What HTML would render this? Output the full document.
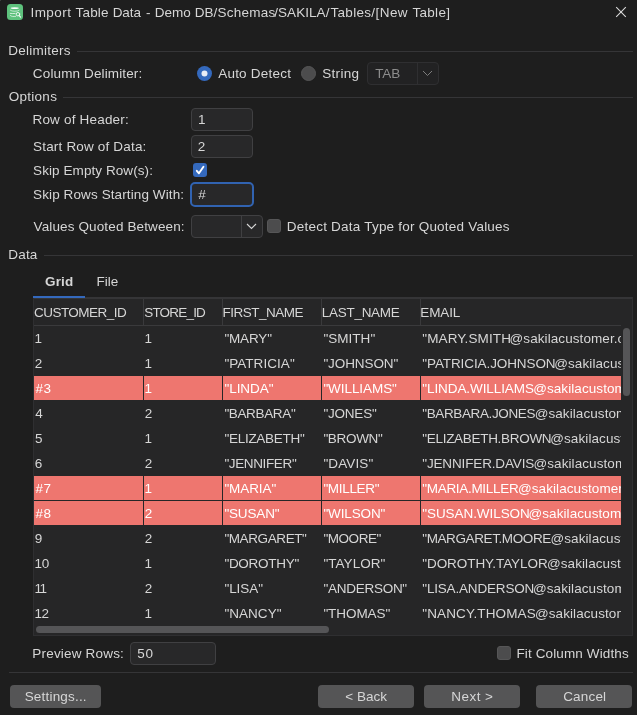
<!DOCTYPE html>
<html lang="en">
<head>
<meta charset="utf-8">
<title>Import Table Data</title>
<style>
html,body{margin:0;padding:0;}
body{width:637px;height:715px;overflow:hidden;background:#1e1e1e;position:relative;
  font-family:"Liberation Sans",sans-serif;font-size:13.5px;color:#d6d6d6;}
.a{position:absolute;}
.t{position:absolute;white-space:nowrap;line-height:16px;height:16px;}
.sep{position:absolute;height:1px;background:#353537;}
.inp{position:absolute;box-sizing:border-box;border:1px solid #404042;background:#282829;border-radius:4px;}
.btn{position:absolute;box-sizing:border-box;background:#555556;border-radius:4px;height:23px;top:685px;}
.cb{position:absolute;box-sizing:border-box;width:14px;height:14px;border-radius:3px;background:#4c4c4d;border:1px solid #565657;}
.vl{position:absolute;width:1px;}
#tbl{position:absolute;left:33px;top:297px;width:600px;height:339px;box-sizing:border-box;border:1px solid #2f2f31;border-top:2px solid #353537;background:#262627;}
#vp{position:absolute;left:34px;top:298px;width:587px;height:327px;overflow:hidden;}
#vp .t{ }
.red{position:absolute;left:0;width:587px;height:24px;background:#ee766f;}
</style>
</head>
<body>
<!-- title bar -->
<div class="a" style="left:0;top:0;width:1px;height:1px;background:#3c3c3c"></div>
<svg class="a" style="left:7px;top:4px" width="16" height="16" viewBox="0 0 16 16">
  <rect x="0" y="0" width="16" height="16" rx="3.500" fill="#5ec27d"/>
  <g fill="none" stroke="#f4fcf7" stroke-width="0.850" stroke-linecap="round">
    <ellipse cx="7.750" cy="4.100" rx="4.100" ry="0.950" fill="#f8fffa" stroke="none"/>
    <path d="M3.300 6.300C4.600 7.700 10.900 7.700 12.200 6.300" opacity="0.750"/>
    <path d="M3.300 9.400Q5.700 9.700 8.100 9.450" opacity="0.900"/>
    <path d="M3.300 11.600C4.200 12.500 6.500 12.700 8.700 12.350" opacity="0.850"/>
    <circle cx="10.950" cy="10.200" r="1.750" stroke-width="0.900"/>
    <path d="M12.250 11.600L13.500 13.050" stroke-width="1.150"/>
  </g>
</svg>
<svg class="a" style="left:615px;top:6px" width="13" height="13" viewBox="0 0 13 13"><path d="M1.200 1.200L10.800 10.800M10.800 1.200L1.200 10.800" stroke="#dcdcdc" stroke-width="1.050" fill="none"/></svg>

<!-- separators -->
<div class="sep" style="left:77px;top:51px;width:556px"></div>
<div class="sep" style="left:63px;top:97px;width:570px"></div>
<div class="sep" style="left:44px;top:255px;width:589px"></div>
<div class="sep" style="left:9px;top:672px;width:624px"></div>

<!-- radios -->
<svg class="a" style="left:197px;top:66px" width="15" height="15" viewBox="0 0 15 15"><circle cx="7.500" cy="7.500" r="7.500" fill="#3469bd"/><circle cx="7.500" cy="7.500" r="3" fill="#e9edf6"/></svg>
<svg class="a" style="left:301px;top:66px" width="15" height="15" viewBox="0 0 15 15"><circle cx="7.500" cy="7.500" r="7" fill="#4c4c4d" stroke="#565657" stroke-width="1"/></svg>

<!-- combo 1 (disabled) -->
<div class="inp" style="left:367px;top:62px;width:72px;height:23px;background:#222223;border-color:#2f2f31"></div>
<div class="vl" style="left:417px;top:63px;height:21px;background:#2f2f31"></div>
<svg class="a" style="left:422px;top:70px" width="11" height="7" viewBox="0 0 11 7"><path d="M1 1l4.500 4.500L10 1" stroke="#7d7d7d" stroke-width="1" fill="none"/></svg>

<!-- inputs -->
<div class="inp" style="left:191px;top:108px;width:62px;height:23px"></div>
<div class="inp" style="left:191px;top:135px;width:62px;height:23px"></div>
<div class="inp" style="left:190px;top:182px;width:64px;height:25px;border:2px solid #3163b1;border-radius:5px"></div>

<!-- checkbox checked -->
<svg class="a" style="left:193px;top:163px" width="14" height="14" viewBox="0 0 14 14"><rect width="14" height="14" rx="3" fill="#3469bd"/><path d="M3.800 7.800L5.950 10.300L10.450 3.700" stroke="#fff" stroke-width="1.900" fill="none" stroke-linecap="round" stroke-linejoin="round"/></svg>

<!-- combo 2 -->
<div class="inp" style="left:191px;top:215px;width:72px;height:23px"></div>
<div class="vl" style="left:241px;top:216px;height:21px;background:#404042"></div>
<svg class="a" style="left:246px;top:223px" width="11" height="7" viewBox="0 0 11 7"><path d="M1 1l4.500 4.500L10 1" stroke="#d6d6d6" stroke-width="1.100" fill="none"/></svg>
<div class="cb" style="left:267px;top:219px"></div>

<!-- tab underline -->
<div class="a" style="left:33px;top:296px;width:52px;height:2px;background:#3469bd;z-index:3"></div>

<!-- table -->
<div id="tbl"></div>
<div id="vp">
  <!-- header bottom line -->
  <div class="a" style="left:0;top:27px;width:587px;height:1px;background:#3a3a3c"></div>
  <div class="vl" style="left:109px;top:1px;height:26px;background:#3a3a3c"></div>
  <div class="vl" style="left:188px;top:1px;height:26px;background:#3a3a3c"></div>
  <div class="vl" style="left:287px;top:1px;height:26px;background:#3a3a3c"></div>
  <div class="vl" style="left:386px;top:1px;height:26px;background:#3a3a3c"></div>
  <div class="red" style="top:78px"></div>
  <div class="red" style="top:178px"></div>
  <div class="red" style="top:203px"></div>
  <div class="vl" style="left:109px;top:28px;height:300px;background:#262627"></div>
  <div class="vl" style="left:188px;top:28px;height:300px;background:#262627"></div>
  <div class="vl" style="left:287px;top:28px;height:300px;background:#262627"></div>
  <div class="vl" style="left:386px;top:28px;height:300px;background:#262627"></div>
  <div class="a" id="cliptexts" style="left:-34px;top:-298px;width:637px;height:715px;will-change:transform">
<div class="a" style="left:0;top:0"><span class="t" style="left:422.28px;top:330.50px;letter-spacing:0.106px;">"MARY.SMITH</span><span class="t" style="left:509.55px;top:330.50px;letter-spacing:0.083px;">@sakilacustomer.org</span>
</div>
<div class="a" style="left:0;top:0"><span class="t" style="left:422.28px;top:355.50px;letter-spacing:-0.092px;">"PATRICIA.JOHNSON</span><span class="t" style="left:554.25px;top:355.50px;letter-spacing:0.083px;">@sakilacustomer.org</span>
</div>
<div class="a" style="left:0;top:0"><span class="t" style="left:422.28px;top:380.50px;letter-spacing:-0.081px;color:#ffffff;">"LINDA.WILLIAMS</span><span class="t" style="left:533.15px;top:380.50px;letter-spacing:0.083px;color:#ffffff;">@sakilacustomer.org</span>
</div>
<div class="a" style="left:0;top:0"><span class="t" style="left:422.28px;top:405.50px;letter-spacing:-0.376px;">"BARBARA.JONES</span><span class="t" style="left:534.65px;top:405.50px;letter-spacing:0.083px;">@sakilacustomer.org</span>
</div>
<div class="a" style="left:0;top:0"><span class="t" style="left:422.28px;top:430.50px;letter-spacing:-0.299px;">"ELIZABETH.BROWN</span><span class="t" style="left:550.25px;top:430.50px;letter-spacing:0.083px;">@sakilacustomer.org</span>
</div>
<div class="a" style="left:0;top:0"><span class="t" style="left:422.28px;top:455.50px;letter-spacing:-0.148px;">"JENNIFER.DAVIS</span><span class="t" style="left:533.45px;top:455.50px;letter-spacing:0.083px;">@sakilacustomer.org</span>
</div>
<div class="a" style="left:0;top:0"><span class="t" style="left:422.28px;top:480.50px;letter-spacing:-0.306px;color:#ffffff;">"MARIA.MILLER</span><span class="t" style="left:517.95px;top:480.50px;letter-spacing:0.083px;color:#ffffff;">@sakilacustomer.org</span>
</div>
<div class="a" style="left:0;top:0"><span class="t" style="left:422.28px;top:505.50px;letter-spacing:-0.066px;color:#ffffff;">"SUSAN.WILSON</span><span class="t" style="left:528.45px;top:505.50px;letter-spacing:0.083px;color:#ffffff;">@sakilacustomer.org</span>
</div>
<div class="a" style="left:0;top:0"><span class="t" style="left:422.28px;top:530.50px;letter-spacing:-0.397px;">"MARGARET.MOORE</span><span class="t" style="left:550.45px;top:530.50px;letter-spacing:0.083px;">@sakilacustomer.org</span>
</div>
<div class="a" style="left:0;top:0"><span class="t" style="left:422.28px;top:555.50px;letter-spacing:-0.066px;">"DOROTHY.TAYLOR</span><span class="t" style="left:546.95px;top:555.50px;letter-spacing:0.083px;">@sakilacustomer.org</span>
</div>
<div class="a" style="left:0;top:0"><span class="t" style="left:422.28px;top:580.50px;letter-spacing:-0.177px;">"LISA.ANDERSON</span><span class="t" style="left:532.95px;top:580.50px;letter-spacing:0.083px;">@sakilacustomer.org</span>
</div>
<div class="a" style="left:0;top:0"><span class="t" style="left:422.28px;top:605.50px;letter-spacing:0.140px;">"NANCY.THOMAS</span><span class="t" style="left:534.95px;top:605.50px;letter-spacing:0.083px;">@sakilacustomer.org</span>
</div>
  </div>
</div>
<!-- scrollbars -->
<div class="a" style="left:623px;top:328px;width:7px;height:68px;border-radius:3.500px;background:#555557"></div>
<div class="a" style="left:36px;top:626px;width:293px;height:7px;border-radius:3.500px;background:#555557"></div>

<!-- preview rows -->
<div class="inp" style="left:130px;top:642px;width:86px;height:23px"></div>
<div class="cb" style="left:497px;top:646px"></div>

<!-- buttons -->
<div class="btn" style="left:10px;width:91px"></div>
<div class="btn" style="left:318px;width:96px"></div>
<div class="btn" style="left:424px;width:96px"></div>
<div class="btn" style="left:536px;width:96px"></div>

<!-- texts -->
<div class="a" id="txt" style="left:0;top:0;width:637px;height:715px;will-change:transform">
<div class="a" style="left:0;top:0"><span class="t" style="left:30.45px;top:4.50px;letter-spacing:0.450px;">Import</span> <span class="t" style="left:75.59px;top:4.50px;letter-spacing:0.146px;">Table</span> <span class="t" style="left:112.65px;top:4.50px;letter-spacing:-0.049px;">Data</span> <span class="t" style="left:145.98px;top:4.50px;letter-spacing:0.250px;">-</span> <span class="t" style="left:154.75px;top:4.50px;letter-spacing:-0.003px;">Demo</span> <span class="t" style="left:194.65px;top:4.50px;letter-spacing:0.002px;">DB/</span><span class="t" style="left:217.38px;top:4.50px;letter-spacing:0.278px;">Schemas</span><span class="t" style="left:274.20px;top:4.50px;letter-spacing:0.068px;">/SAKILA/</span><span class="t" style="left:330.59px;top:4.50px;letter-spacing:0.262px;">Tables</span><span class="t" style="left:371.20px;top:4.50px;letter-spacing:0.482px;">/[New</span> <span class="t" style="left:412.39px;top:4.50px;letter-spacing:0.317px;">Table]</span>
</div>
<div class="t" style="left:8.25px;top:42.50px;letter-spacing:0.241px;">Delimiters</div>
<div class="t" style="left:32.87px;top:65.50px;letter-spacing:0.130px;">Column Delimiter:</div>
<div class="t" style="left:218.20px;top:65.50px;letter-spacing:0.222px;">Auto Detect</div>
<div class="t" style="left:322.18px;top:65.50px;letter-spacing:0.323px;">String</div>
<div class="t" style="left:375.19px;top:65.50px;letter-spacing:-0.088px;color:#8c8c8c;">TAB</div>
<div class="t" style="left:8.67px;top:88.50px;letter-spacing:0.288px;">Options</div>
<div class="t" style="left:32.45px;top:111.50px;letter-spacing:0.191px;">Row of Header:</div>
<div class="t" style="left:197.96px;top:111.50px;letter-spacing:0.250px;">1</div>
<div class="t" style="left:33.08px;top:138.50px;letter-spacing:0.173px;">Start Row of Data:</div>
<div class="t" style="left:197.67px;top:138.50px;letter-spacing:0.250px;">2</div>
<div class="t" style="left:33.08px;top:162.50px;letter-spacing:0.078px;">Skip Empty Row(s):</div>
<div class="t" style="left:33.08px;top:186.50px;letter-spacing:0.104px;">Skip Rows Starting With:</div>
<div class="t" style="left:198.30px;top:186.50px;letter-spacing:0.250px;">#</div>
<div class="t" style="left:33.50px;top:218.50px;letter-spacing:0.132px;">Values Quoted Between:</div>
<div class="t" style="left:286.85px;top:218.50px;letter-spacing:0.215px;">Detect Data Type for Quoted Values</div>
<div class="t" style="left:8.25px;top:246.50px;letter-spacing:0.184px;">Data</div>
<div class="t" style="left:45.08px;top:273.50px;letter-spacing:0.145px;font-weight:bold;">Grid</div>
<div class="t" style="left:96.45px;top:273.50px;letter-spacing:-0.017px;">File</div>
<div class="t" style="left:32.35px;top:645.50px;letter-spacing:0.183px;">Preview Rows:</div>
<div class="t" style="left:137.28px;top:645.50px;letter-spacing:0.842px;">50</div>
<div class="t" style="left:516.45px;top:645.50px;letter-spacing:0.125px;">Fit Column Widths</div>
<div class="t" style="left:24.68px;top:688.50px;letter-spacing:0.191px;">Settings...</div>
<div class="t" style="left:345.37px;top:688.50px;letter-spacing:-0.005px;">&lt; Back</div>
<div class="t" style="left:451.25px;top:688.50px;letter-spacing:0.473px;">Next &gt;</div>
<div class="t" style="left:563.17px;top:688.50px;letter-spacing:0.180px;">Cancel</div>
<div class="t" style="left:33.97px;top:304.50px;letter-spacing:-0.531px;">CUSTOMER_ID</div>
<div class="t" style="left:144.18px;top:304.50px;letter-spacing:-0.797px;">STORE_ID</div>
<div class="t" style="left:222.45px;top:304.50px;letter-spacing:-0.487px;">FIRST_NAME</div>
<div class="t" style="left:321.65px;top:304.50px;letter-spacing:-0.257px;">LAST_NAME</div>
<div class="t" style="left:420.35px;top:304.50px;letter-spacing:-0.156px;">EMAIL</div>
<div class="t" style="left:34.56px;top:330.50px;letter-spacing:0.300px;">1</div>
<div class="t" style="left:144.46px;top:330.50px;letter-spacing:0.250px;">1</div>
<div class="t" style="left:224.38px;top:330.50px;letter-spacing:-0.150px;">"MARY"</div>
<div class="t" style="left:323.38px;top:330.50px;letter-spacing:0.036px;">"SMITH"</div>
<div class="t" style="left:34.77px;top:355.50px;letter-spacing:0.300px;">2</div>
<div class="t" style="left:144.46px;top:355.50px;letter-spacing:0.250px;">1</div>
<div class="t" style="left:224.38px;top:355.50px;letter-spacing:0.051px;">"PATRICIA"</div>
<div class="t" style="left:323.38px;top:355.50px;letter-spacing:-0.087px;">"JOHNSON"</div>
<div class="t" style="left:35.40px;top:380.50px;letter-spacing:0.531px;color:#ffffff;">#3</div>
<div class="t" style="left:144.46px;top:380.50px;letter-spacing:0.250px;color:#ffffff;">1</div>
<div class="t" style="left:224.38px;top:380.50px;letter-spacing:-0.025px;color:#ffffff;">"LINDA"</div>
<div class="t" style="left:323.38px;top:380.50px;letter-spacing:-0.067px;color:#ffffff;">"WILLIAMS"</div>
<div class="t" style="left:35.19px;top:405.50px;letter-spacing:0.300px;">4</div>
<div class="t" style="left:144.67px;top:405.50px;letter-spacing:0.250px;">2</div>
<div class="t" style="left:224.38px;top:405.50px;letter-spacing:-0.351px;">"BARBARA"</div>
<div class="t" style="left:323.38px;top:405.50px;letter-spacing:-0.200px;">"JONES"</div>
<div class="t" style="left:34.98px;top:430.50px;letter-spacing:0.300px;">5</div>
<div class="t" style="left:144.46px;top:430.50px;letter-spacing:0.250px;">1</div>
<div class="t" style="left:224.38px;top:430.50px;letter-spacing:-0.261px;">"ELIZABETH"</div>
<div class="t" style="left:323.38px;top:430.50px;letter-spacing:-0.322px;">"BROWN"</div>
<div class="t" style="left:34.77px;top:455.50px;letter-spacing:0.300px;">6</div>
<div class="t" style="left:144.67px;top:455.50px;letter-spacing:0.250px;">2</div>
<div class="t" style="left:224.38px;top:455.50px;letter-spacing:-0.366px;">"JENNIFER"</div>
<div class="t" style="left:323.38px;top:455.50px;letter-spacing:0.117px;">"DAVIS"</div>
<div class="t" style="left:35.40px;top:480.50px;letter-spacing:0.531px;color:#ffffff;">#7</div>
<div class="t" style="left:144.46px;top:480.50px;letter-spacing:0.250px;color:#ffffff;">1</div>
<div class="t" style="left:224.38px;top:480.50px;letter-spacing:-0.074px;color:#ffffff;">"MARIA"</div>
<div class="t" style="left:323.38px;top:480.50px;letter-spacing:-0.322px;color:#ffffff;">"MILLER"</div>
<div class="t" style="left:35.40px;top:505.50px;letter-spacing:0.531px;color:#ffffff;">#8</div>
<div class="t" style="left:144.67px;top:505.50px;letter-spacing:0.250px;color:#ffffff;">2</div>
<div class="t" style="left:224.38px;top:505.50px;letter-spacing:-0.150px;color:#ffffff;">"SUSAN"</div>
<div class="t" style="left:323.38px;top:505.50px;letter-spacing:-0.121px;color:#ffffff;">"WILSON"</div>
<div class="t" style="left:34.77px;top:530.50px;letter-spacing:0.300px;">9</div>
<div class="t" style="left:144.67px;top:530.50px;letter-spacing:0.250px;">2</div>
<div class="t" style="left:224.38px;top:530.50px;letter-spacing:-0.399px;">"MARGARET"</div>
<div class="t" style="left:323.38px;top:530.50px;letter-spacing:-0.432px;">"MOORE"</div>
<div class="t" style="left:34.56px;top:555.50px;letter-spacing:-0.336px;">10</div>
<div class="t" style="left:144.46px;top:555.50px;letter-spacing:0.250px;">1</div>
<div class="t" style="left:224.38px;top:555.50px;letter-spacing:-0.274px;">"DOROTHY"</div>
<div class="t" style="left:323.38px;top:555.50px;letter-spacing:0.057px;">"TAYLOR"</div>
<div class="t" style="left:34.56px;top:580.50px;letter-spacing:-1.523px;">11</div>
<div class="t" style="left:144.67px;top:580.50px;letter-spacing:0.250px;">2</div>
<div class="t" style="left:224.38px;top:580.50px;letter-spacing:-0.031px;">"LISA"</div>
<div class="t" style="left:323.38px;top:580.50px;letter-spacing:-0.256px;">"ANDERSON"</div>
<div class="t" style="left:34.56px;top:605.50px;letter-spacing:-0.625px;">12</div>
<div class="t" style="left:144.46px;top:605.50px;letter-spacing:0.250px;">1</div>
<div class="t" style="left:224.38px;top:605.50px;letter-spacing:0.042px;">"NANCY"</div>
<div class="t" style="left:323.38px;top:605.50px;letter-spacing:-0.063px;">"THOMAS"</div>
</div>
</body>
</html>
